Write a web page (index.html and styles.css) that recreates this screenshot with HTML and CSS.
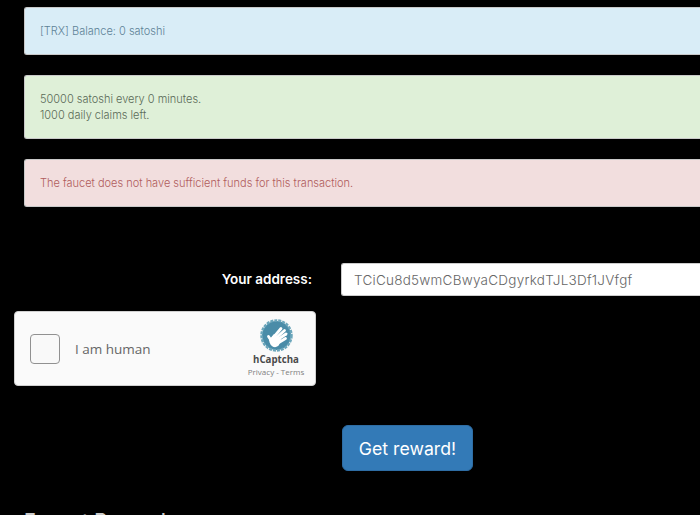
FILE: index.html
```html
<!DOCTYPE html>
<html lang="en">
<head>
  <meta charset="UTF-8">
  <meta name="viewport" content="width=device-width, initial-scale=1.0">
  <title>Faucet</title>
  <link rel="stylesheet" href="styles.css">
</head>
<body>

  <div class="alerts">
    <div class="alert alert-info">[TRX] Balance: 0 satoshi</div>
    <div class="alert alert-success">50000 satoshi every 0 minutes.<br>1000 daily claims left.</div>
    <div class="alert alert-danger">The faucet does not have sufficient funds for this transaction.</div>
  </div>

  <form class="claim">
    <div class="address-row">
      <label class="address-label" for="address">Your address:</label>
      <input class="address-input" id="address" type="text" value="TCiCu8d5wmCBwyaCDgyrkdTJL3Df1JVfgf">
    </div>

    <div class="captcha">
      <div class="captcha-check"></div>
      <div class="captcha-text">I am human</div>
      <div class="captcha-brand">
        <svg class="captcha-logo" width="33" height="33" viewBox="0 0 33 33">
          <circle cx="16.500" cy="16.500" r="14.500" fill="#4a8ca8"/>
          <circle cx="16.500" cy="16.500" r="15" fill="none" stroke="#6ba6bb" stroke-width="2.500" stroke-dasharray="3 1"/>
          <g fill="none" stroke="#fff" stroke-width="2.800" stroke-linecap="round">
            <path d="M13 19L21 9.500"/>
            <path d="M15 20L24.500 11.500"/>
            <path d="M17 21L26 15"/>
            <path d="M18 24L25.500 19.500"/>
            <path d="M8.500 17.500L11.500 22"/>
          </g>
          <path fill="#fff" d="M9 21l5-6 7 5-2 6c-1.500 1.800-3.500 2.500-5.500 2-2.500-.8-3.800-3.500-4.500-7z"/>
        </svg>
        <div class="captcha-name">hCaptcha</div>
        <div class="captcha-links">Privacy - Terms</div>
      </div>
    </div>

    <div class="submit-row">
      <button class="btn-reward" type="button">Get reward!</button>
    </div>
  </form>

  <h2 class="section-title">Faucet Rewards</h2>

</body>
</html>
```

FILE: styles.css
```css
html, body {
  height: 515px;
  overflow: hidden;
}

body {
  margin: 0;
  background-color: #000;
  font-family: "Liberation Sans", Arial, sans-serif;
  font-size: 11px;
  color: #fff;
}

.alerts {
  padding: 7px 0 0 24px;
}

.alert {
  margin-bottom: 20px;
  padding: 15px;
  border: 1px solid #c9c9c9;
  border-right: none;
  border-radius: 3px 0 0 3px;
  line-height: 16px;
  font-family: Inter, "Liberation Sans", sans-serif;
  font-weight: 300;
}

.alert-info {
  background-color: #d9edf7;
  color: #5d8296;
}

.alert-success {
  background-color: #dff0d8;
  color: #5a6a57;
}

.alert-danger {
  background-color: #f2dede;
  color: #b05c5c;
}

.claim {
  margin-top: 56px;
}

.address-row {
  display: flex;
  align-items: center;
}

.address-label {
  width: 312px;
  padding-bottom: 2px;
  text-align: right;
  font-family: Inter, "Liberation Sans", sans-serif;
  font-size: 13.500px;
  font-weight: 600;
}

.address-input {
  flex: 1;
  min-width: 0;
  height: 33px;
  margin-left: 29px;
  padding: 0 12px;
  box-sizing: border-box;
  border: 1px solid #ccc;
  border-right: none;
  border-radius: 3px 0 0 3px;
  background-color: #fff;
  color: #666;
  font-family: Inter, "Liberation Sans", sans-serif;
  font-size: 13.500px;
  font-weight: 300;
  letter-spacing: 0.25px;
}

.captcha {
  display: flex;
  align-items: center;
  width: 300px;
  height: 73px;
  margin: 15px 0 0 14px;
  border: 1px solid #d0d0d0;
  border-radius: 4px;
  background-color: #fafafa;
  color: #666;
}

.captcha-check {
  width: 28px;
  height: 28px;
  margin-left: 15px;
  border: 1px solid #919191;
  border-radius: 4px;
  background-color: #f9f9f9;
}

.captcha-text {
  flex: 1;
  margin-left: 15px;
  font-family: "Open Sans", sans-serif;
  font-size: 13.500px;
}

.captcha-brand {
  display: flex;
  flex-direction: column;
  align-items: center;
  width: 60px;
  margin-right: 9px;
  margin-top: -1px;
}

.captcha-name {
  margin-top: 1px;
  color: #4a4a4a;
  font-family: "Open Sans", sans-serif;
  font-size: 9.700px;
  font-weight: 700;
  line-height: 14px;
}

.captcha-links {
  color: #808080;
  font-family: "Open Sans", sans-serif;
  font-size: 8px;
  line-height: 10px;
}

.submit-row {
  margin-top: 39px;
  padding-left: 342px;
}

.btn-reward {
  width: 131px;
  height: 46px;
  border: 1px solid #2e6da4;
  border-radius: 6px;
  background-color: #337ab7;
  color: #fff;
  font-family: Inter, "Liberation Sans", sans-serif;
  font-size: 17.700px;
}

.section-title {
  margin: 38px 0 0 24px;
  color: #ccc;
  font-family: Inter, "Liberation Sans", sans-serif;
  font-size: 20px;
  font-weight: 500;
}
```
